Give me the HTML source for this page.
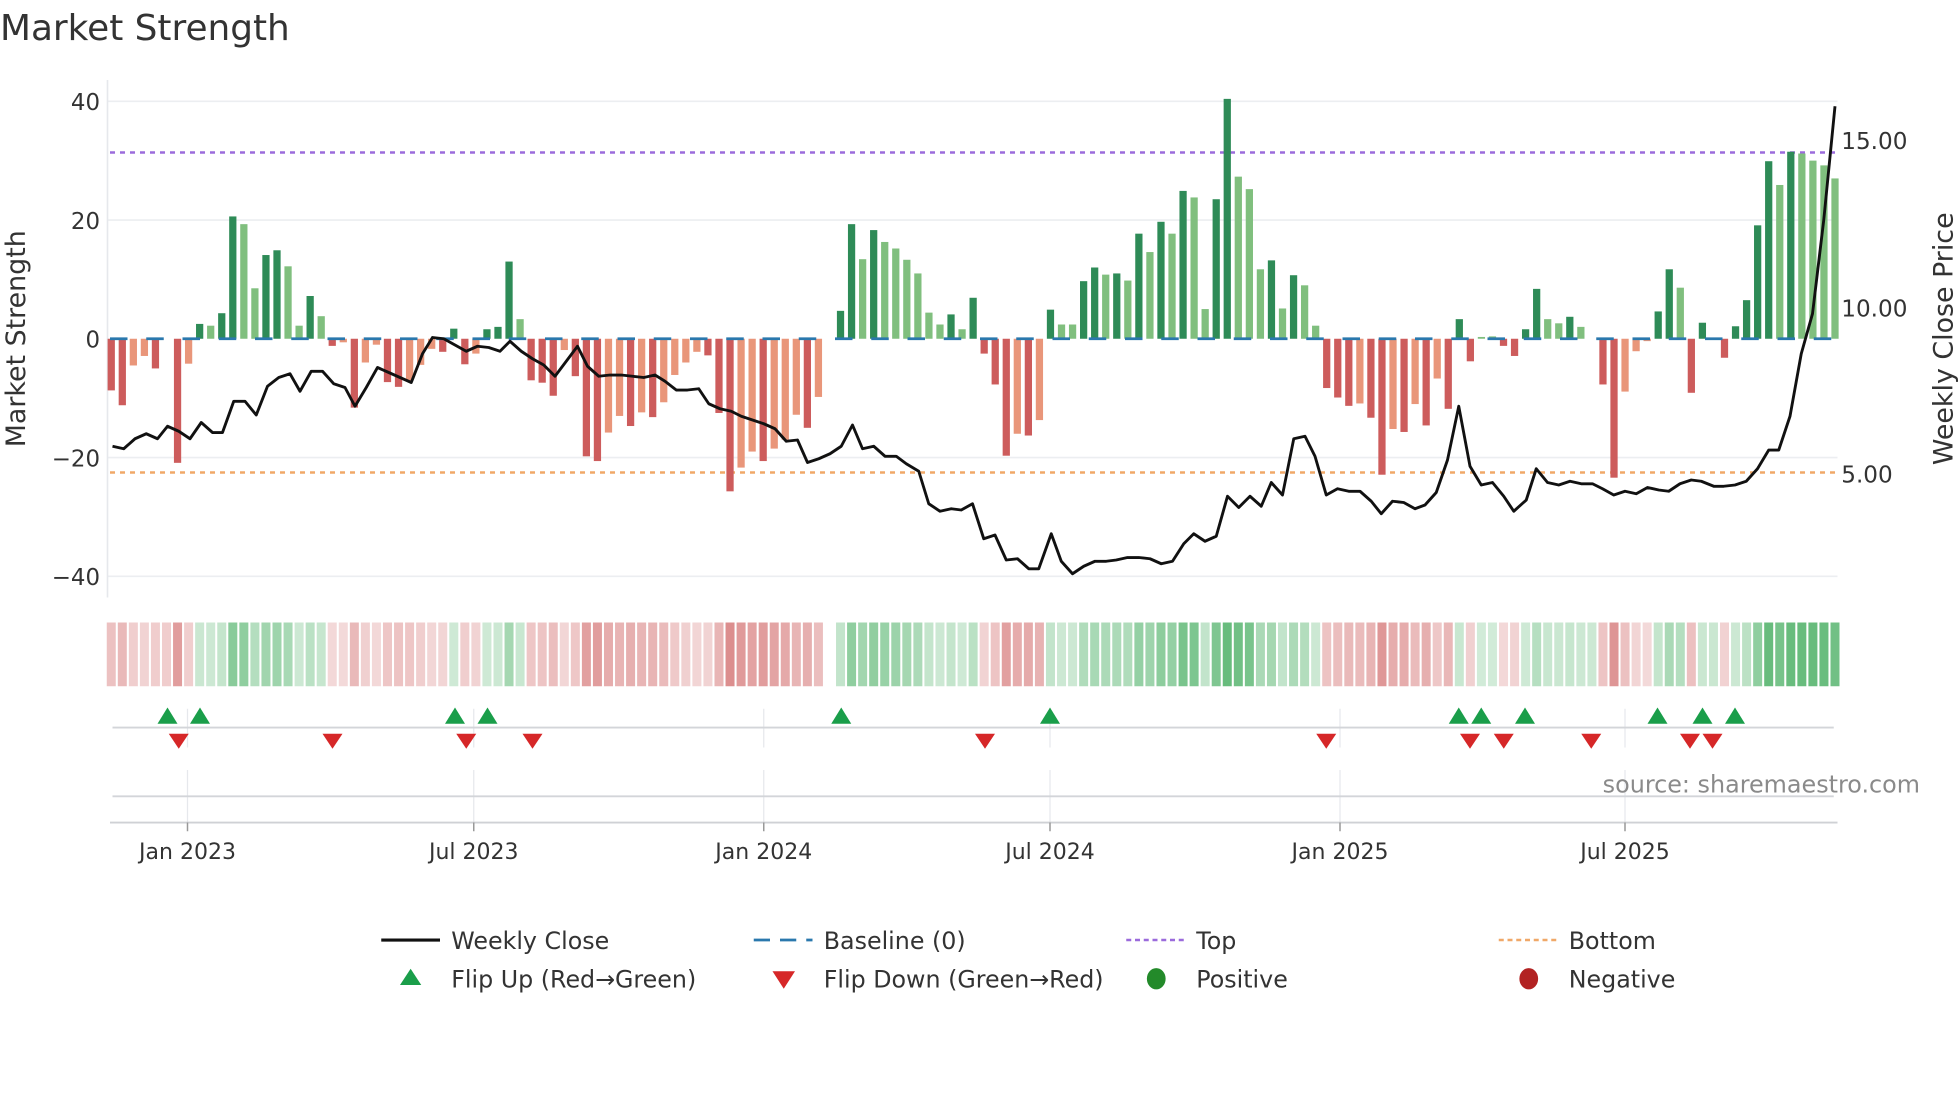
<!DOCTYPE html>
<html><head><meta charset="utf-8"><style>
html,body{margin:0;padding:0;background:#fff;}
svg{display:block;font-family:"DejaVu Sans","Liberation Sans",sans-serif;}
</style></head><body>
<svg id="s" width="1960" height="1102" viewBox="0 0 1568 881.6" xmlns="http://www.w3.org/2000/svg">
<rect width="1568" height="882" fill="#fff"/>
<text x="0" y="32" font-size="28.7" fill="#333">Market Strength</text>
<g stroke="#eceef1" stroke-width="1.3">
<line x1="86" y1="81" x2="1470" y2="81"/><line x1="86" y1="176" x2="1470" y2="176"/>
<line x1="86" y1="366" x2="1470" y2="366"/><line x1="86" y1="461" x2="1470" y2="461"/>
</g>
<line x1="86" y1="64" x2="86" y2="478" stroke="#e6e8ec" stroke-width="1.3"/>
<g font-size="18.3" fill="#333" text-anchor="end">
<text x="80" y="88">40</text><text x="80" y="183">20</text><text x="80" y="278">0</text>
<text x="80" y="373">−20</text><text x="80" y="468">−40</text>
</g>
<g font-size="18.5" fill="#333">
<text x="1473" y="119">15.00</text><text x="1473" y="253">10.00</text><text x="1473" y="386">5.00</text>
</g>
<text transform="translate(20,271) rotate(-90)" font-size="21.5" fill="#333" text-anchor="middle">Market Strength</text>
<text transform="translate(1562,271) rotate(-90)" font-size="21.5" fill="#333" text-anchor="middle">Weekly Close Price</text>
<line x1="88" y1="122" x2="1470" y2="122" stroke="#9b6bdc" stroke-width="2" stroke-dasharray="4 4"/>
<line x1="88" y1="378" x2="1470" y2="378" stroke="#f0a868" stroke-width="2" stroke-dasharray="4 4"/>
<g id="bars"></g>
<line x1="88" y1="271" x2="1470" y2="271" stroke="#2a78ad" stroke-width="2.2" stroke-dasharray="14 15"/>
<polyline id="price" fill="none" stroke="#111" stroke-width="2.3" stroke-linejoin="round"/>
<g id="heat"></g>
<g stroke="#e6e8ec" stroke-width="1">
<line x1="150" y1="567" x2="150" y2="598"/><line x1="379" y1="567" x2="379" y2="598"/><line x1="611" y1="567" x2="611" y2="598"/><line x1="840" y1="567" x2="840" y2="598"/><line x1="1072" y1="567" x2="1072" y2="598"/><line x1="1300" y1="567" x2="1300" y2="598"/>
<line x1="150" y1="616" x2="150" y2="658"/><line x1="379" y1="616" x2="379" y2="658"/><line x1="611" y1="616" x2="611" y2="658"/><line x1="840" y1="616" x2="840" y2="658"/><line x1="1072" y1="616" x2="1072" y2="658"/><line x1="1300" y1="616" x2="1300" y2="658"/>
</g>
<line x1="90" y1="582" x2="1467" y2="582" stroke="#d3d5d9" stroke-width="1.5"/>
<line x1="90" y1="637" x2="1467" y2="637" stroke="#d3d5d9" stroke-width="1.5"/>
<line x1="88" y1="658" x2="1470" y2="658" stroke="#cfd1d5" stroke-width="1.5"/>
<g stroke="#999" stroke-width="1.2">
<line x1="150" y1="658" x2="150" y2="665"/><line x1="379" y1="658" x2="379" y2="665"/><line x1="611" y1="658" x2="611" y2="665"/><line x1="840" y1="658" x2="840" y2="665"/><line x1="1072" y1="658" x2="1072" y2="665"/><line x1="1300" y1="658" x2="1300" y2="665"/>
</g>
<g id="flips"></g>
<text x="1536" y="634" font-size="19.1" fill="#8a8a8a" text-anchor="end">source: sharemaestro.com</text>
<g font-size="17.6" fill="#333" text-anchor="middle">
<text x="150" y="687">Jan 2023</text><text x="379" y="687">Jul 2023</text><text x="611" y="687">Jan 2024</text>
<text x="840" y="687">Jul 2024</text><text x="1072" y="687">Jan 2025</text><text x="1300" y="687">Jul 2025</text>
</g>
<g font-size="19" fill="#333">
<line x1="305" y1="752" x2="352" y2="752" stroke="#111" stroke-width="2.5"/>
<text x="361" y="759">Weekly Close</text>
<line x1="603" y1="752" x2="650" y2="752" stroke="#2a78ad" stroke-width="2.2" stroke-dasharray="13 8"/>
<text x="659" y="759">Baseline (0)</text>
<line x1="901" y1="752" x2="948" y2="752" stroke="#9b6bdc" stroke-width="2" stroke-dasharray="4 3"/>
<text x="957" y="759">Top</text>
<line x1="1199" y1="752" x2="1246" y2="752" stroke="#f0a868" stroke-width="2" stroke-dasharray="4 3"/>
<text x="1255" y="759">Bottom</text>
<polygon points="320,788 337,788 328.5,775" fill="#1a9e4a"/>
<text x="361" y="790">Flip Up (Red→Green)</text>
<polygon points="618,777 636,777 627,791" fill="#d62728"/>
<text x="659" y="790">Flip Down (Green→Red)</text>
<ellipse cx="925" cy="783" rx="7.5" ry="8.5" fill="#238a2a"/>
<text x="957" y="790">Positive</text>
<ellipse cx="1223" cy="783" rx="7.5" ry="8.5" fill="#b22222"/>
<text x="1255" y="790">Negative</text>
</g>
</svg>
<script>
(function(){
var NS="http://www.w3.org/2000/svg";
var d="-8.7d,-11.2d,-4.5l,-2.9l,-5d,0n,-20.9d,-4.2l,2.5d,2.2l,4.3d,20.6d,19.3l,8.5l,14.1d,14.9d,12.2l,2.2l,7.2d,3.8l,-1.2d,-0.6l,-11.6d,-4l,-1l,-7.3d,-8.1d,-7.1l,-4.4l,-1.7l,-2.2d,1.7d,-4.3d,-2.5l,1.6d,2d,13d,3.3l,-7d,-7.4d,-9.6d,-1.9l,-6.3d,-19.8d,-20.6d,-15.8l,-13l,-14.7d,-12.4l,-13.2d,-10.7l,-6.1l,-4l,-2.2l,-2.8d,-12.5d,"+
"-25.7d,-21.7l,-19l,-20.6d,-18.5l,-17l,-12.8l,-15d,-9.8l,0x,4.7d,19.3d,13.4l,18.3d,16.3l,15.2l,13.3l,11l,4.4l,2.4l,4.1d,1.6l,6.9d,-2.5d,-7.7d,-19.7d,-16l,-16.3d,-13.7l,4.9d,2.4l,2.4l,9.7d,12d,10.8l,11d,9.8l,17.7d,14.6l,19.7d,17.7l,24.9d,23.8l,5l,23.5d,40.4d,27.3l,25.2l,11.7l,13.2d,5.1l,10.7d,9l,2.2l,"+
"-8.3d,-9.9d,-11.3d,-10.9l,-13.3d,-22.9d,-15.2l,-15.7d,-11l,-14.6d,-6.7l,-11.8d,3.3d,-3.8d,0.3l,0.4l,-1.2d,-2.9d,1.6d,8.4d,3.3l,2.6l,3.7d,2l,0n,-7.7d,-23.4d,-8.9l,-2.1l,-0.4l,4.6d,11.7d,8.6l,-9.1d,2.7d,0n,-3.2d,2.1d,6.5d,19.1d,29.9d,25.9l,31.5d,31.2l,30l,29.2l,27l";
var a=d.split(","),n=a.length,step=(1468-89)/(n-1);
var bars=document.getElementById("bars"),heat=document.getElementById("heat");
var prev=-1;
for(var i=0;i<n;i++){
 var s=a[i],t=s.slice(-1),v=parseFloat(s),x=89+i*step;
 if(v!==0){
  var r=document.createElementNS(NS,"rect");
  var y0=271,y1=271-v*4.75;
  r.setAttribute("x",(x-2.9).toFixed(2));r.setAttribute("width","5.8");
  r.setAttribute("y",Math.min(y0,y1).toFixed(2));r.setAttribute("height",Math.abs(y1-y0).toFixed(2));
  var c=v>0?(t=="d"?"#2e8b57":"#80bf7e"):(t=="d"?"#cd5c5c":"#e9967a");
  r.setAttribute("fill",c);bars.appendChild(r);
 }
 if(t!="x"){
  var h=document.createElementNS(NS,"rect");
  h.setAttribute("x",(x-3.6).toFixed(2));h.setAttribute("width","7.2");
  h.setAttribute("y","498");h.setAttribute("height","51");
  var sv=v!==0?v:(prev);
  var m=Math.min(Math.abs(sv),30)/30;
  var op=(0.22+0.55*m).toFixed(2);
  h.setAttribute("fill",sv>=0?"#3aa856":"#cd5c5c");h.setAttribute("fill-opacity",op);
  heat.appendChild(h);
 }
 if(v!==0)prev=v;
}
var p="90,357 99,359 108,351 117,347 126,351 134,341 143,345 152,351 161,338 170,346 178,346 187,321 196,321 205,332 214,309 223,302 232,299 240,313 249,297 258,297 267,307 276,310 284,325 293,310 302,294 311,298 320,302 329,306 338,283 346,270 355,271 364,276 373,281 382,277 391,278 400,281 408,273 417,281 426,287 435,292 444,301 453,289 462,277 470,293 479,301 488,300 497,300 506,301 515,302 524,300 532,305 541,312 550,312 559,311 567,323 576,327 585,329 593,333 602,336 611,339 620,343 629,353 638,352 646,370 655,367 664,363 673,357 682,340 690,359 699,357 708,365 717,365 725,371 735,377 743,403 752,409 761,407 769,408 778,403 787,431 796,428 805,448 814,447 823,455 831,455 841,427 849,449 858,459 867,453 876,449 885,449 893,448 902,446 911,446 920,447 929,451 938,449 947,435 955,427 964,433 973,429 982,397 991,406 1000,397 1009,405 1017,386 1026,396 1035,351 1044,349 1052,365 1061,396 1070,391 1079,393 1088,393 1097,401 1105,411 1114,401 1123,402 1132,407 1140,404 1149,394 1158,368 1167,325 1176,373 1185,388 1194,386 1203,397 1211,409 1221,400 1229,375 1238,386 1247,388 1256,385 1265,387 1274,387 1282,391 1291,396 1300,393 1309,395 1318,390 1327,392 1335,393 1344,387 1353,384 1361,385 1371,389 1379,389 1388,388 1397,385 1406,375 1415,360 1423,360 1432,333 1441,283 1450,251 1459,176 1468,85";
document.getElementById("price").setAttribute("points",p);
var fl=document.getElementById("flips");
[134,160,364,390,673,840,1167,1185,1220,1326,1362,1388].forEach(function(x){
 var q=document.createElementNS(NS,"polygon");
 q.setAttribute("points",(x-8)+",579 "+(x+8)+",579 "+x+",566");q.setAttribute("fill","#1a9e4a");fl.appendChild(q);});
[143,266,373,426,788,1061,1176,1203,1273,1352,1370].forEach(function(x){
 var q=document.createElementNS(NS,"polygon");
 q.setAttribute("points",(x-8)+",587 "+(x+8)+",587 "+x+",599");q.setAttribute("fill","#d62728");fl.appendChild(q);});
})();
</script>
</body></html>
